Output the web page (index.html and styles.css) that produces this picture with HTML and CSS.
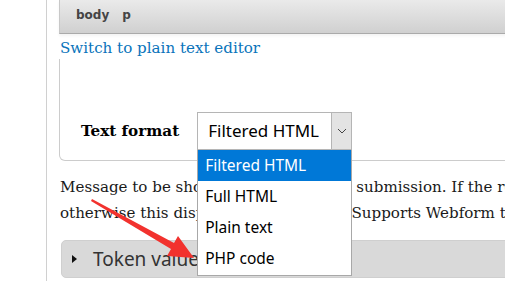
FILE: index.html
```html
<!DOCTYPE html>
<html lang="en">
<head>
    <meta charset="UTF-8">
    <meta name="viewport" content="width=device-width, initial-scale=1.0">
    <title>Webform confirmation message</title>
    <link rel="stylesheet" href="styles.css">
</head>
<body>
    <div class="page">
        <div class="gutter"></div>
        <div class="main">
            <!-- Barra do editor -->
            <div class="editor-path">
                <span>body</span>
                <span>p</span>
            </div>
            <a class="switch-link" href="#">Switch to plain text editor</a>

            <div class="filter-wrapper">
                <div class="format-row">
                    <label class="format-label" for="format">Text format</label>
                    <div class="select-box" id="format">
                        <span class="select-value">Filtered HTML</span>
                        <span class="select-arrow">
                            <svg width="10" height="6" viewBox="0 0 10 6"><path d="M1 1 L5 5 L9 1" fill="none" stroke="#444" stroke-width="1"/></svg>
                        </span>
                        <ul class="select-list">
                            <li class="selected">Filtered HTML</li>
                            <li>Full HTML</li>
                            <li>Plain text</li>
                            <li>PHP code</li>
                        </ul>
                    </div>
                </div>
            </div>

            <p class="description">
                <span>Message to be shown upon successful submission. If the redirection location is set to "Confirmation page"</span>
                <span>otherwise this displays as a message. Supports Webform token replacements.</span>
            </p>

            <div class="token-bar">
                <span class="token-toggle"></span>
                <span>Token values</span>
            </div>
        </div>
    </div>

    <!-- Seta vermelha -->
    <svg class="pointer" width="505" height="281" viewBox="0 0 505 281">
        <polygon points="92,199 174,243 178,236 194,258 167,256 171,249 91,201" fill="#f2322e"/>
    </svg>
</body>
</html>
```

FILE: styles.css
```css
html, body {
    margin: 0;
    background-color: #ffffff;
    overflow: hidden;
}

.page {
    display: flex;
    height: 281px;
}

.gutter {
    width: 46px;
    flex: none;
    border-right: 1px solid #d0d0d0;
}

.main {
    flex: 1;
    padding-left: 12px;
    min-width: 0;
}

.editor-path {
    height: 34px;
    margin-right: -20px;
    padding: 0 0 4px 16px;
    box-sizing: border-box;
    display: flex;
    align-items: center;
    gap: 13px;
    background: linear-gradient(#eaeaea, #d0d0d0);
    border-left: 1px solid #c8c8c8;
    border-bottom: 1px solid #aaaaaa;
    box-shadow: 0 2px 3px rgba(0,0,0,0.05);
    font-family: "DejaVu Sans", sans-serif;
    font-weight: bold;
    font-size: 12px;
    color: #444444;
}

.switch-link {
    display: block;
    margin: 3px 0 0 1px;
    font-family: "DejaVu Serif", serif;
    font-size: 15.1px;
    line-height: 22px;
    color: #0a74bb;
    text-decoration: none;
}

.filter-wrapper {
    margin-right: -20px;
    height: 102px;
    border: 1px solid #cccccc;
    border-top: none;
    border-radius: 0 0 6px 6px;
    box-sizing: border-box;
    padding: 53px 0 0 21px;
}

.format-row {
    display: flex;
    align-items: center;
    gap: 18px;
}

.format-label {
    font-family: "DejaVu Serif", serif;
    font-weight: bold;
    font-size: 15.2px;
}

.select-box {
    position: relative;
    display: flex;
    width: 155px;
    height: 38px;
    box-sizing: border-box;
    border: 1px solid #b5b5b5;
    font-family: "Noto Sans", sans-serif;
    color: #000000;
}

.select-value {
    flex: 1;
    padding-left: 10px;
    font-size: 17px;
    line-height: 36px;
}

.select-arrow {
    width: 19px;
    display: flex;
    align-items: center;
    justify-content: center;
    background-color: #e3e3e3;
    border-left: 1px solid #b5b5b5;
}

.select-list {
    position: absolute;
    top: 37px;
    left: -1px;
    width: 155px;
    margin: 0;
    padding: 0 0 1px;
    list-style: none;
    box-sizing: border-box;
    background-color: #ffffff;
    border: 1px solid #a8a8a8;
    border-top: none;
    z-index: 2;
}

.select-list li {
    height: 31px;
    line-height: 31px;
    padding-left: 7px;
    font-size: 15.5px;
}

.select-list li.selected {
    background-color: #0078d7;
    color: #ffffff;
}

.description {
    margin: 13px 0 0 1px;
    font-family: "DejaVu Serif", serif;
    font-size: 15.1px;
    line-height: 26px;
    color: #1a1a1a;
    white-space: nowrap;
}

.description span {
    display: block;
}

.token-bar {
    margin: 14px -20px 0 2px;
    height: 36px;
    display: flex;
    align-items: center;
    gap: 16px;
    padding-left: 10px;
    background-color: #d9d9d9;
    border: 1px solid #cfcfcf;
    border-radius: 5px;
    font-family: "Noto Sans", sans-serif;
    font-size: 19px;
    color: #333333;
}

.token-toggle {
    width: 0;
    height: 0;
    border-top: 4px solid transparent;
    border-bottom: 4px solid transparent;
    border-left: 5px solid #111111;
}

.pointer {
    position: absolute;
    top: 0;
    left: 0;
    z-index: 3;
    pointer-events: none;
}
```
